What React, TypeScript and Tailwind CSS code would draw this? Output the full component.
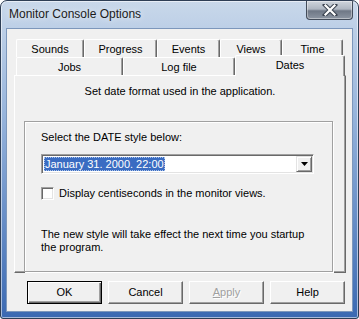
import React from 'react';

const font = { fontFamily: '"Liberation Sans", Arial, sans-serif' };

interface TabProps {
  label: string;
  width: string;
  selected?: boolean;
}

const Tab = ({ label, width, selected }: TabProps) => {
  if (selected) {
    return (
      <div
        className={`${width} h-[21px] -mb-px relative z-10 bg-[#f0f0f0] border-t border-l border-white border-r border-r-[#696969] shadow-[inset_-1px_0_0_#a0a0a0] rounded-t-[2px] flex justify-center pt-[3px] text-[11px] leading-[13px]`}
      >
        {label}
      </div>
    );
  }
  return (
    <div
      className={`${width} h-[18px] bg-[#f0f0f0] border-t border-l border-white border-r border-r-[#696969] shadow-[inset_-1px_0_0_#a0a0a0] rounded-t-[2px] flex justify-center pt-[3px] text-[11px] leading-[13px]`}
    >
      {label}
    </div>
  );
};

const Button = ({ children, isDefault, disabled }: { children: React.ReactNode; isDefault?: boolean; disabled?: boolean }) => (
  <div
    className={`w-[75px] h-[23px] bg-[#f0f0f0] flex items-center justify-center text-[11px] ${
      isDefault
        ? 'border border-black shadow-[inset_1px_1px_0_#fff,inset_-1px_-1px_0_#696969,inset_-2px_-2px_0_#a0a0a0]'
        : 'border-t border-l border-white border-r border-b border-r-[#696969] border-b-[#696969] shadow-[inset_-1px_-1px_0_#a0a0a0]'
    } ${disabled ? 'text-[#a0a0a0] [text-shadow:1px_1px_0_#fff]' : 'text-black'}`}
  >
    {children}
  </div>
);

const App = () => {
  return (
    <div
      className="w-[359px] h-[319px] flex flex-col rounded-t-[7px] rounded-b-[3px] border border-[#2e3e55] shadow-[inset_0_0_0_1px_rgba(255,255,255,0.55)] bg-linear-to-b from-[#c9d8ea] from-0% via-[#98b5dc] via-35% to-[#3b69b2] to-100% overflow-hidden"
      style={font}
    >
      {/* title bar */}
      <div className="h-[28px] flex items-start justify-between">
        <div className="pl-[8px] pt-[6px] text-[12px] leading-[15px] text-[#1b1b1b] [text-shadow:0_0_6px_rgba(255,255,255,0.95)]">
          Monitor Console Options
        </div>
        <div className="mr-[5px] w-[47px] h-[19px] rounded-b-[4px] border border-t-0 border-[#434c5a] bg-[linear-gradient(180deg,#cfd5dd_0%,#aeb6c1_45%,#6f7886_55%,#8c95a2_100%)] shadow-[inset_0_0_0_1px_rgba(255,255,255,0.4)] flex items-center justify-center">
          <svg width="16" height="12" viewBox="0 0 16 12">
            <path d="M3 1 L13 11 M13 1 L3 11" stroke="#3b4350" strokeWidth="4.2" strokeLinecap="square" />
            <path d="M3.5 1.5 L12.5 10.5 M12.5 1.5 L3.5 10.5" stroke="#ffffff" strokeWidth="2.2" strokeLinecap="square" />
          </svg>
        </div>
      </div>

      {/* client area */}
      <div className="mx-[6px] mb-[7px] flex-1 bg-[#f0f0f0] shadow-[0_0_0_1px_#7d97bb] flex flex-col text-black">
        <div className="pl-[7px] pt-[10px]">
          {/* tab rows */}
          <div className="pl-[2px] flex">
            <Tab label="Sounds" width="w-[68px]" />
            <Tab label="Progress" width="w-[73px]" />
            <Tab label="Events" width="w-[63px]" />
            <Tab label="Views" width="w-[62px]" />
            <Tab label="Time" width="w-[61px]" />
          </div>
          <div className="pl-[2px] flex items-end h-[18px]">
            <Tab label="Jobs" width="w-[107px]" />
            <Tab label="Log file" width="w-[112px]" />
            <Tab label="Dates" width="w-[110px]" selected />
          </div>

          {/* tab panel */}
          <div className="w-[332px] h-[198px] border-t border-l border-white border-r border-b border-r-[#696969] border-b-[#696969] shadow-[inset_-1px_-1px_0_#a0a0a0] flex flex-col">
            <div className="pt-[9px] text-center text-[11px] leading-[13px]">
              Set date format used in the application.
            </div>
            <div className="ml-[9px] mt-[23px] w-[309px] h-[152px] border border-[#a0a0a0] shadow-[inset_1px_1px_0_#fff,1px_1px_0_#fff] pl-[16px] pt-[9px] flex flex-col">
              <div className="text-[11px] leading-[13px]">Select the DATE style below:</div>
              <div className="mt-[10px] w-[273px] h-[20px] bg-white border-t border-l border-[#a0a0a0] border-r border-b border-r-white border-b-white shadow-[inset_1px_1px_0_#696969,inset_-1px_-1px_0_#e3e3e3] flex items-center justify-between pl-[2px] pr-[1px]">
                <span className="bg-[#3a6cc2] text-white text-[11px] leading-[14px] px-[1px] outline-1 outline-dotted outline-[#a9c2ea] -outline-offset-1">
                  January 31. 2000. 22:00
                </span>
                <div className="w-[16px] h-[16px] bg-[#f0f0f0] border-t border-l border-[#e3e3e3] border-r border-b border-r-[#696969] border-b-[#696969] shadow-[inset_1px_1px_0_#fff,inset_-1px_-1px_0_#a0a0a0] flex items-center justify-center">
                  <svg width="7" height="4" viewBox="0 0 7 4">
                    <path d="M0 0 H7 L3.5 4 Z" fill="#000" />
                  </svg>
                </div>
              </div>
              <div className="mt-[13px] flex items-center gap-[5px]">
                <div className="w-[13px] h-[13px] bg-white border-t border-l border-[#a0a0a0] border-r border-b border-r-white border-b-white shadow-[inset_1px_1px_0_#696969,inset_-1px_-1px_0_#e3e3e3]" />
                <span className="text-[11px] leading-[13px]">Display centiseconds in the monitor views.</span>
              </div>
              <div className="mt-[28px] text-[11px] leading-[13px] pr-[10px]">
                The new style will take effect the next time you startup the program.
              </div>
            </div>
          </div>
        </div>

        {/* buttons */}
        <div className="pl-[20px] pt-[8px] flex gap-[6px]">
          <Button isDefault>OK</Button>
          <Button>Cancel</Button>
          <Button disabled>
            <span className="underline underline-offset-1">A</span>pply
          </Button>
          <Button>Help</Button>
        </div>
      </div>
    </div>
  );
};

export default App;
